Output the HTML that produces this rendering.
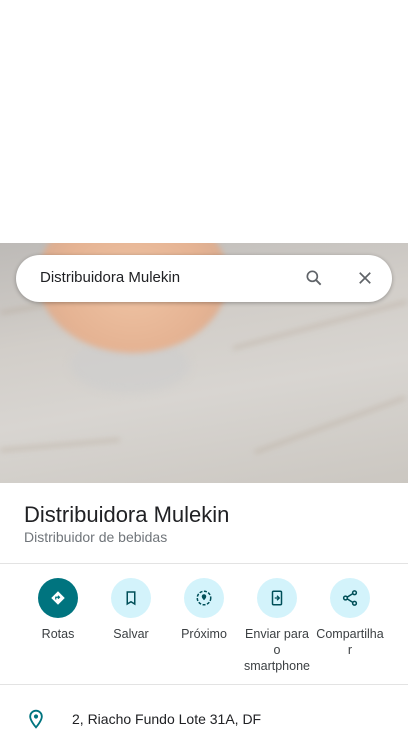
<!DOCTYPE html>
<html><head><meta charset="utf-8"><style>
*{margin:0;padding:0;box-sizing:border-box}
body{width:408px;height:726px;overflow:hidden;background:#fff;font-family:"Liberation Sans",Roboto,sans-serif;position:relative}
.photo{position:absolute;left:0;top:243px;width:408px;height:240px;overflow:hidden;
background:linear-gradient(170deg,#bdbab7 0%,#d2cec9 35%,#d8d5d1 60%,#cbc7c1 100%)}
.bowl{position:absolute;left:38px;top:-40px;width:190px;height:150px;border-radius:50%;
background:radial-gradient(ellipse at 50% 55%,#efc3a3 0%,#e5b393 55%,#d4a98f 85%,rgba(210,170,140,0) 100%);filter:blur(3px)}
.base{position:absolute;left:70px;top:95px;width:120px;height:55px;border-radius:50%;background:rgba(205,205,205,.6);filter:blur(4px)}
.streak{position:absolute;height:4px;background:rgba(170,150,130,.3);filter:blur(3px)}
.search{position:absolute;left:16px;top:255px;width:376px;height:47px;background:#fff;border-radius:24px;box-shadow:0 1px 4px rgba(0,0,0,.3)}
.search span{position:absolute;left:24px;top:14px;font-size:15px;color:#202124}
h1{position:absolute;left:24px;top:502px;font-size:22px;font-weight:400;color:#202124}
.sub{position:absolute;left:24px;top:529px;font-size:14px;color:#70757a}
.hr{position:absolute;left:0;width:408px;height:1px;background:#e3e3e3}
.btn{position:absolute;top:578px;width:74px;text-align:center;font-size:12.5px;color:#3c4043;line-height:16px;overflow-wrap:anywhere}
.c{width:40px;height:40px;border-radius:50%;background:#d3f3fb;margin:0 auto 8px;display:flex;align-items:center;justify-content:center}
.addr{position:absolute;left:72px;top:711px;font-size:14px;color:#202124}
</style></head><body>
<div class="photo">
<div class="streak" style="left:0;top:60px;width:90px;transform:rotate(-10deg)"></div>
<div class="streak" style="left:230px;top:80px;width:180px;transform:rotate(-15deg)"></div>
<div class="streak" style="left:0;top:200px;width:120px;transform:rotate(-5deg)"></div>
<div class="streak" style="left:250px;top:180px;width:160px;transform:rotate(-20deg)"></div>
<div class="base"></div>
<div class="bowl"></div>
</div>
<div class="search"><span>Distribuidora Mulekin</span>
<svg style="position:absolute;left:288px;top:13px" width="20" height="20" viewBox="0 0 24 24"><circle cx="10" cy="10" r="6" fill="none" stroke="#5f6368" stroke-width="2"/><path d="M14.5 14.5L20 20" stroke="#5f6368" stroke-width="2.2"/></svg>
<svg style="position:absolute;left:340px;top:14px" width="18" height="18" viewBox="0 0 24 24"><path d="M5 5L19 19M19 5L5 19" stroke="#5f6368" stroke-width="2.2"/></svg>
</div>
<h1>Distribuidora Mulekin</h1>
<div class="sub">Distribuidor de bebidas</div>
<div class="hr" style="top:563px"></div>
<div class="btn" style="left:21px"><div class="c" style="background:#00747f"><svg width="18" height="18" viewBox="0 0 24 24"><path d="M12 3L21 12L12 21L3 12Z" fill="#fff"/><path d="M9 14v-3h5M12 9l2 2-2 2" stroke="#00747f" stroke-width="1.6" fill="none"/></svg></div>Rotas</div>
<div class="btn" style="left:94px"><div class="c"><svg width="18" height="18" viewBox="0 0 24 24"><path d="M7 4h10v16l-5-3-5 3z" fill="none" stroke="#004f58" stroke-width="2"/></svg></div>Salvar</div>
<div class="btn" style="left:167px"><div class="c"><svg width="18" height="18" viewBox="0 0 24 24"><circle cx="12" cy="12" r="9" fill="none" stroke="#004f58" stroke-width="2" stroke-dasharray="4 2"/><path d="M12 7a3 3 0 0 1 3 3c0 2-3 5-3 5s-3-3-3-5a3 3 0 0 1 3-3z" fill="#004f58"/></svg></div>Próximo</div>
<div class="btn" style="left:240px"><div class="c"><svg width="18" height="18" viewBox="0 0 24 24"><rect x="6" y="3" width="12" height="18" rx="1.5" fill="none" stroke="#004f58" stroke-width="2"/><path d="M9 12h5M12 9l3 3-3 3" stroke="#004f58" stroke-width="1.8" fill="none"/></svg></div>Enviar para<br>o<br>smartphone</div>
<div class="btn" style="left:313px"><div class="c"><svg width="18" height="18" viewBox="0 0 24 24"><circle cx="18" cy="5" r="2.5" fill="none" stroke="#004f58" stroke-width="2"/><circle cx="6" cy="12" r="2.5" fill="none" stroke="#004f58" stroke-width="2"/><circle cx="18" cy="19" r="2.5" fill="none" stroke="#004f58" stroke-width="2"/><path d="M8 11l8-5M8 13l8 5" stroke="#004f58" stroke-width="2"/></svg></div>Compartilha<br>r</div>
<div class="hr" style="top:684px"></div>
<svg style="position:absolute;left:26px;top:709px" width="20" height="20" viewBox="0 0 24 24"><path d="M12 2a7 7 0 0 1 7 7c0 5-7 13-7 13S5 14 5 9a7 7 0 0 1 7-7z" fill="none" stroke="#00747f" stroke-width="2.2"/><circle cx="12" cy="9" r="2.5" fill="#00747f"/></svg>
<div class="addr">2, Riacho Fundo Lote 31A, DF</div>
</body></html>
